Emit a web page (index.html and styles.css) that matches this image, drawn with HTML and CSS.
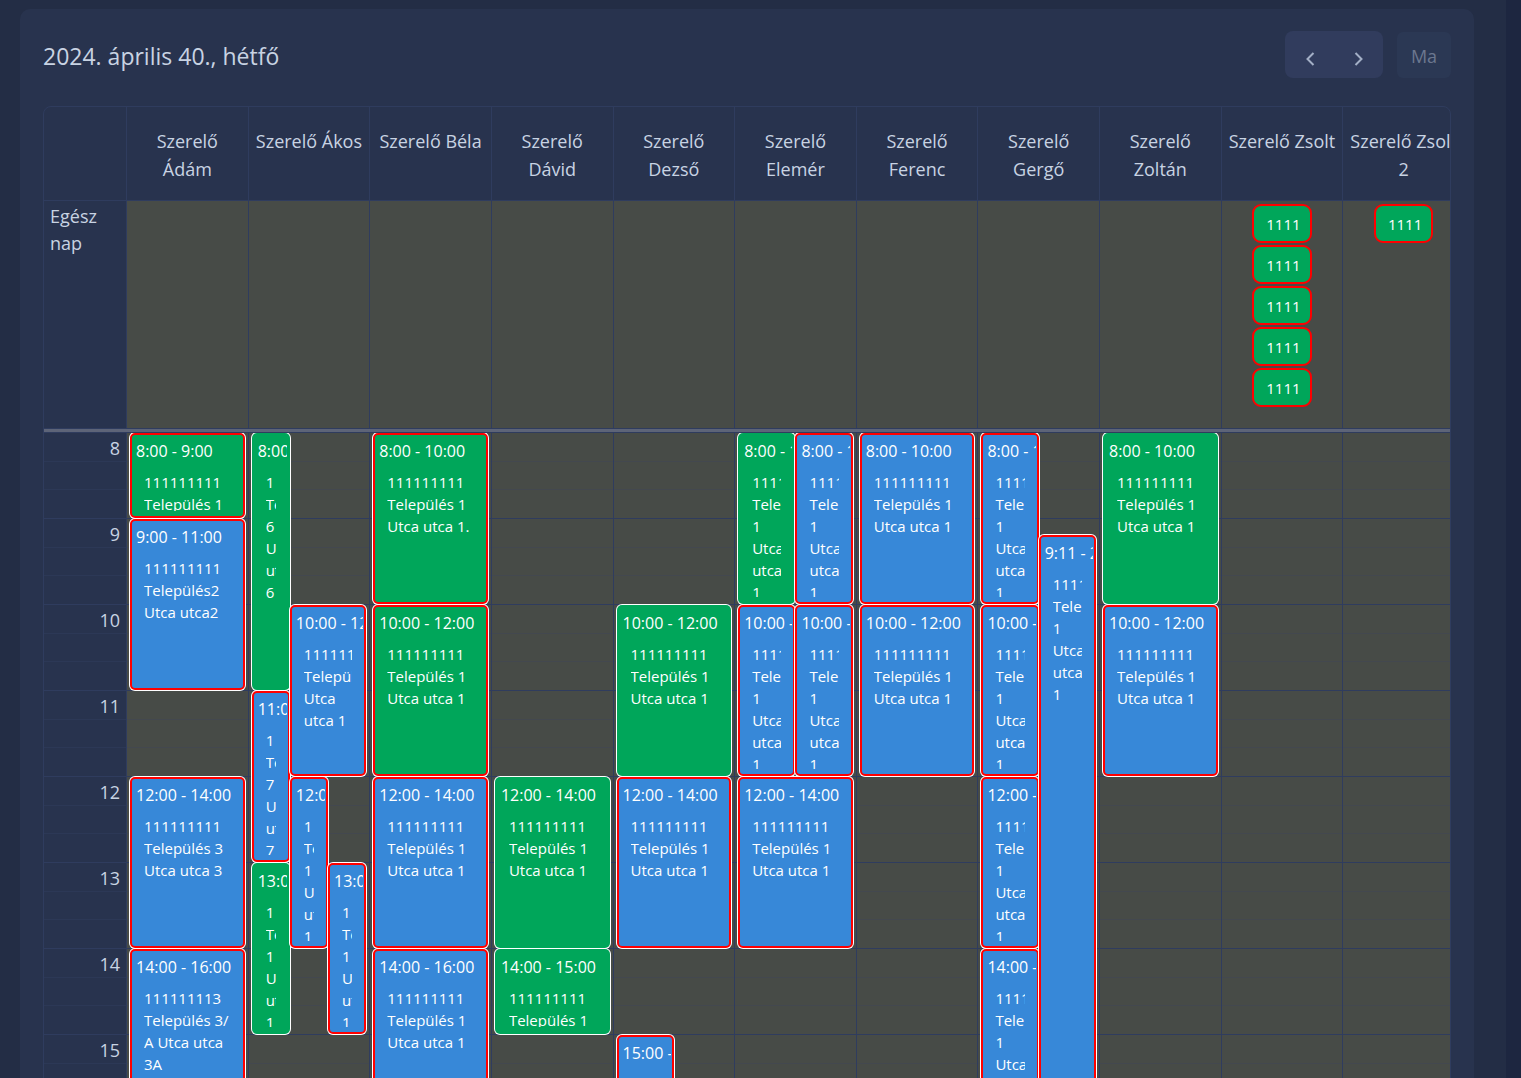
FILE: index.html
```
<!DOCTYPE html>
<html lang="hu">
<head>
<meta charset="utf-8">
<meta name="viewport" content="width=device-width, initial-scale=1">
<title>Naptár</title>
<link rel="stylesheet" href="styles.css">
</head>
<body>
<main class="page">
<section class="card">
  <header class="toolbar">
    <h1 class="title">2024. április 40., hétfő</h1>
    <div class="actions">
      <div class="btn-group">
        <button class="btn" type="button" aria-label="Előző nap"><svg class="icon" viewBox="0 0 16 16"><path d="M11.500 2 5.500 8l6 6"/></svg></button>
        <button class="btn" type="button" aria-label="Következő nap"><svg class="icon" viewBox="0 0 16 16"><path d="M4.500 2l6 6-6 6"/></svg></button>
      </div>
      <button class="btn btn-today" type="button" disabled>Ma</button>
    </div>
  </header>

  <div class="scroller">
  <table class="calendar">
    <colgroup><col class="axis-col"><col span="11"></colgroup>
    <thead>
      <tr>
        <td class="axis"></td>
        <th scope="col">Szerelő Ádám</th>
        <th scope="col">Szerelő Ákos</th>
        <th scope="col">Szerelő Béla</th>
        <th scope="col">Szerelő Dávid</th>
        <th scope="col">Szerelő Dezső</th>
        <th scope="col">Szerelő Elemér</th>
        <th scope="col">Szerelő Ferenc</th>
        <th scope="col">Szerelő Gergő</th>
        <th scope="col">Szerelő Zoltán</th>
        <th scope="col">Szerelő Zsolt</th>
        <th scope="col">Szerelő Zsolt 2</th>
      </tr>
    </thead>
    <tbody>
      <tr class="all-day">
        <th class="axis" scope="row">Egész nap</th>
        <td></td><td></td><td></td><td></td><td></td><td></td><td></td><td></td><td></td>
        <td>
          <div class="pills">
            <div class="pill">1111</div>
            <div class="pill">1111</div>
            <div class="pill">1111</div>
            <div class="pill">1111</div>
            <div class="pill">1111</div>
          </div>
        </td>
        <td><div class="pills"><div class="pill">1111</div></div></td>
      </tr>
      <tr class="divider"><td colspan="12"></td></tr>
      <tr class="times">
        <th class="axis" scope="row">
          <div class="hours">
            <span>8</span><span>9</span><span>10</span><span>11</span><span>12</span><span>13</span><span>14</span><span>15</span><span>16</span>
          </div>
        </th>
        <td><div class="lanes">
          <article class="event green late h8 d1"><time>8:00 - 9:00</time><p>111111111 Település 1 Utca utca 1</p></article>
          <article class="event late h9 d2"><time>9:00 - 11:00</time><p>111111111 Település2 Utca utca2</p></article>
          <article class="event late h12 d2"><time>12:00 - 14:00</time><p>111111111 Település 3 Utca utca 3</p></article>
          <article class="event late h14 d2"><time>14:00 - 16:00</time><p>111111113 Település 3/<wbr>A Utca utca 3A</p></article>
        </div></td>
        <td><div class="lanes three">
          <article class="event green h8 d3"><time>8:00 - 11:00</time><p>1 Település 6 Utca utca 6</p></article>
          <article class="event late h11 d2"><time>11:00 - 13:00</time><p>1 Település 7 Utca utca 7</p></article>
          <article class="event green h13 d2"><time>13:00 - 15:00</time><p>1 Település 1 Utca utca 1</p></article>
          <article class="event late h10 d2 lane-2-wide"><time>10:00 - 12:00</time><p>111111111 Település Utca utca 1</p></article>
          <article class="event late h12 d2 lane-2"><time>12:00 - 14:00</time><p>1 Település 1 Utca utca 1</p></article>
          <article class="event late h13 d2 lane-3"><time>13:00 - 15:00</time><p>1 Település 1 Utca utca 1</p></article>
        </div></td>
        <td><div class="lanes">
          <article class="event green late h8 d2"><time>8:00 - 10:00</time><p>111111111 Település 1 Utca utca 1.</p></article>
          <article class="event green late h10 d2"><time>10:00 - 12:00</time><p>111111111 Település 1 Utca utca 1</p></article>
          <article class="event late h12 d2"><time>12:00 - 14:00</time><p>111111111 Település 1 Utca utca 1</p></article>
          <article class="event late h14 d2"><time>14:00 - 16:00</time><p>111111111 Település 1 Utca utca 1</p></article>
        </div></td>
        <td><div class="lanes">
          <article class="event green h12 d2"><time>12:00 - 14:00</time><p>111111111 Település 1 Utca utca 1</p></article>
          <article class="event green h14 d1"><time>14:00 - 15:00</time><p>111111111 Település 1 Utca utca 1</p></article>
        </div></td>
        <td><div class="lanes two">
          <article class="event green h10 d2 full"><time>10:00 - 12:00</time><p>111111111 Település 1 Utca utca 1</p></article>
          <article class="event late h12 d2 full"><time>12:00 - 14:00</time><p>111111111 Település 1 Utca utca 1</p></article>
          <article class="event late h15 d2"><time>15:00 - 17:00</time><p>111111111 Település 1 Utca utca 1</p></article>
        </div></td>
        <td><div class="lanes two">
          <article class="event green h8 d2"><time>8:00 - 10:00</time><p>111111111 Település 1 Utca utca 1</p></article>
          <article class="event late h10 d2"><time>10:00 - 12:00</time><p>111111111 Település 1 Utca utca 1</p></article>
          <article class="event late h8 d2 lane-2"><time>8:00 - 10:00</time><p>111111111 Település 1 Utca utca 1</p></article>
          <article class="event late h10 d2 lane-2"><time>10:00 - 12:00</time><p>111111111 Település 1 Utca utca 1</p></article>
          <article class="event late h12 d2 full"><time>12:00 - 14:00</time><p>111111111 Település 1 Utca utca 1</p></article>
        </div></td>
        <td><div class="lanes">
          <article class="event late h8 d2"><time>8:00 - 10:00</time><p>111111111 Település 1 Utca utca 1</p></article>
          <article class="event late h10 d2"><time>10:00 - 12:00</time><p>111111111 Település 1 Utca utca 1</p></article>
        </div></td>
        <td><div class="lanes two">
          <article class="event late h8 d2"><time>8:00 - 10:00</time><p>111111111 Település 1 Utca utca 1</p></article>
          <article class="event late h10 d2"><time>10:00 - 12:00</time><p>111111111 Település 1 Utca utca 1</p></article>
          <article class="event late h12 d2"><time>12:00 - 14:00</time><p>111111111 Település 1 Utca utca 1</p></article>
          <article class="event late h14 d2"><time>14:00 - 16:00</time><p>111111111 Település 1 Utca utca 1</p></article>
          <article class="event late h9 to-end quarter-past lane-2"><time>9:11 - 20:11</time><p>111111111 Település 1 Utca utca 1</p></article>
        </div></td>
        <td><div class="lanes">
          <article class="event green h8 d2"><time>8:00 - 10:00</time><p>111111111 Település 1 Utca utca 1</p></article>
          <article class="event late h10 d2"><time>10:00 - 12:00</time><p>111111111 Település 1 Utca utca 1</p></article>
        </div></td>
        <td><div class="lanes"></div></td>
        <td><div class="lanes"></div></td>
      </tr>
    </tbody>
  </table>
  </div>
</section>
</main>
</body>
</html>
```
FILE: styles.css
```
:root {
  --page: #232d45;
  --card: #28334e;
  --line: #2f3c5e;
  --cell: #474b47;
  --text: #c8d3e3;
  --red: #ff0000;
  --green: #00a65a;
  --hour: 86px;
}

* { box-sizing: border-box; }

body {
  margin: 0;
  height: 100vh;
  overflow: hidden;
  background: #1d2640;
  color: var(--text);
  font: 18px/27px "Segoe UI", "Open Sans", "Noto Sans", sans-serif;
}

.page {
  margin-right: 15px;
  padding: 9px 32px 0 20px;
  background: var(--page);
}

.card {
  padding: 22px 23px;
  border-radius: 10px;
  background: var(--card);
}

.toolbar {
  display: flex;
  align-items: center;
  justify-content: space-between;
  margin-bottom: 28px;
}

.title {
  margin: 0;
  padding-top: 2px;
  font-size: 23px;
  font-weight: 400;
  line-height: 36px;
}

.actions {
  display: flex;
  align-items: center;
  gap: 14px;
}

.btn-group {
  display: flex;
  overflow: hidden;
  border-radius: 8px;
}

.btn {
  display: flex;
  align-items: center;
  justify-content: center;
  width: 49px;
  height: 47px;
  padding: 8px 0 0;
  border: 0;
  background: #313c5d;
  color: #a3afc6;
  font: inherit;
}

.btn-today {
  width: 54px;
  height: 46px;
  padding: 4px 0 0;
  border-radius: 6px;
  background: #2b3854;
  color: #6b778f;
}

.icon {
  width: 16px;
  height: 16px;
  fill: none;
  stroke: currentColor;
  stroke-width: 2;
}

.scroller {
  overflow: hidden;
  border: 1px solid var(--line);
  border-radius: 8px 8px 0 0;
}

.calendar {
  width: calc(100% + 14px);
  table-layout: fixed;
  border-spacing: 0;
}

.axis-col { width: 82px; }

.calendar th,
.calendar td {
  padding: 0;
  border-left: 1px solid var(--line);
  font-weight: 400;
  vertical-align: top;
}

.calendar .axis { border-left: 0; }

.calendar thead th,
.calendar thead td {
  height: 94px;
  border-bottom: 1px solid var(--line);
}

.calendar thead th {
  padding: 20px 6px 0;
  line-height: 28px;
}

.calendar tbody td { background-color: var(--cell); }

.all-day { height: 227px; }

.calendar .all-day .axis {
  padding: 2px 6px;
  text-align: left;
}

.pills {
  display: flex;
  flex-direction: column;
  align-items: center;
  gap: 2px;
  padding-top: 3px;
}

.pill {
  height: 39px;
  padding: 6px 9px 0 12px;
  border: 2px solid var(--red);
  border-radius: 9px;
  background: var(--green);
  color: #fff;
  font-size: 15px;
  line-height: 25px;
}

.calendar .divider td {
  height: 5px;
  border: solid var(--line);
  border-width: 1px 0;
  background: #5d6478;
}

/* Hour line at the foot of each row, with fainter lines every 20 minutes. */
.times > .axis,
.times > td {
  background-image:
    linear-gradient(transparent 85px, var(--line) 85px),
    linear-gradient(transparent 28px, var(--slot) 28px 29px, transparent 29px 56px, var(--slot) 56px 57px, transparent 57px);
  background-size: 100% var(--hour);
}

.times > .axis { --slot: #2c3856; }
.times > td { --slot: #43484f; }

.hours {
  display: grid;
  grid-auto-rows: var(--hour);
  padding-right: 6px;
  text-align: right;
}

.hours span { padding-top: 2px; }

.lanes {
  display: grid;
  grid-template-rows: repeat(9, var(--hour));
  grid-template-columns: minmax(0, 1fr);
  padding: 0 3px;
  overflow: hidden;
}

.two { grid-template-columns: repeat(2, minmax(0, 1fr)); }
.three { grid-template-columns: repeat(3, minmax(0, 1fr)); }

.event {
  grid-column: 1;
  display: flex;
  flex-direction: column;
  margin-bottom: 1px;
  padding: 5px 1px;
  border: 2px solid transparent;
  border-radius: 5px;
  background: #3788d8 border-box;
  box-shadow: 0 0 0 1px #fff;
  color: #fff;
  font-size: 15px;
  line-height: 22px;
  overflow: hidden;
}

.green { background-color: var(--green); }
.late { border-color: var(--red); }

.event time {
  flex: none;
  padding-left: 3px;
  overflow: hidden;
  font-size: 16px;
  line-height: 22px;
  white-space: nowrap;
}

.event p {
  flex: 0 1 auto;
  min-height: 0;
  margin: 9px 11px 0;
  overflow: hidden;
}

.lane-2 { grid-column: 2; }
.lane-2-wide { grid-column: 2 / 4; }
.lane-3 { grid-column: 3; }
.full { grid-column: 1 / -1; }

.h8 { grid-row-start: 1; }
.h9 { grid-row-start: 2; }
.h10 { grid-row-start: 3; }
.h11 { grid-row-start: 4; }
.h12 { grid-row-start: 5; }
.h13 { grid-row-start: 6; }
.h14 { grid-row-start: 7; }
.h15 { grid-row-start: 8; }

.d1 { grid-row-end: span 1; }
.d2 { grid-row-end: span 2; }
.d3 { grid-row-end: span 3; }
.to-end { grid-row-end: -1; }
.quarter-past { margin-top: 16px; }
```
